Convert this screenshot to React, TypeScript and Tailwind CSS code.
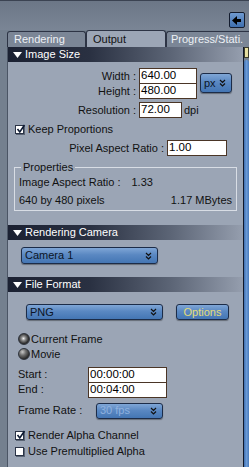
import React from 'react';

const Chevron = () => (
  <svg width="7" height="8" viewBox="0 0 7 8" className="shrink-0">
    <path d="M1 1 L3.5 3.5 L6 1 M1 4.5 L3.5 7 L6 4.5" stroke="#111" strokeWidth="1.2" fill="none" />
  </svg>
);

const Header = ({ title }: { title: string }) => (
  <div className="h-[15px] flex items-center gap-[3px] pl-[5px] text-white bg-[linear-gradient(90deg,#1b2132_0%,#2a3142_35%,#5d6677_70%,#959eae_100%)]">
    <svg width="9" height="6" viewBox="0 0 9 6">
      <path d="M0 0 H9 L4.5 6 Z" fill="#fff" />
    </svg>
    <span className="leading-none">{title}</span>
  </div>
);

const Input = ({ value, className }: { value: string; className: string }) => (
  <div className={`h-[16px] bg-white border border-[#4a3526] flex items-center pl-[1px] text-black text-[11.5px] ${className}`}>
    {value}
  </div>
);

const Select = ({ value, className, dim }: { value: string; className: string; dim?: boolean }) => (
  <div
    className={`flex items-center justify-between pl-[3px] pr-[5px] rounded-[3px] border border-[#1c2c48] bg-[linear-gradient(180deg,#7fa6d6_0%,#5a88c2_45%,#4476b4_100%)] shadow-[0_1px_1px_rgba(0,0,0,0.35)] ${className}`}
  >
    <span className={dim ? 'text-[#8fb1de]' : 'text-[#0c1526]'}>{value}</span>
    <Chevron />
  </div>
);

const Check = ({ checked }: { checked?: boolean }) => (
  <div className="w-[9px] h-[9px] bg-white border border-[#2a3346] shadow-[1px_1px_0_#5a6474] relative shrink-0">
    {checked && (
      <svg width="10" height="10" viewBox="0 0 10 10" className="absolute -top-[2px] left-0">
        <path d="M1.5 5 L3.8 8 L8.5 1" stroke="#0d1a33" strokeWidth="1.6" fill="none" />
      </svg>
    )}
  </div>
);

const Radio = ({ on }: { on?: boolean }) => (
  <div
    className={`w-[12px] h-[12px] rounded-full shrink-0 border border-[#2e333c] ${
      on
        ? 'bg-[radial-gradient(circle_at_45%_45%,#f2f2f2_0%,#8a8a8a_28%,#2c2c2c_65%,#6a6a6a_100%)]'
        : 'bg-[radial-gradient(circle_at_35%_30%,#c8c8c8_0%,#6e6e6e_35%,#262626_75%,#5a5a5a_100%)]'
    }`}
  />
);

export default function App() {
  return (
    <div
      className="w-[249px] h-[467px] overflow-hidden bg-[#74808f] border-t border-[#3b4352] flex flex-col text-[11px] text-[#111]"
      style={{ fontFamily: '"Liberation Sans", Arial, sans-serif' }}
    >
      {/* top strip */}
      <div className="h-[29px] flex justify-end items-start pt-[11px] pr-[4px] bg-[linear-gradient(180deg,#6c7787,#7a8595)]">
        <div className="w-[16px] h-[16px] rounded-[2px] border border-[#131c2e] bg-[linear-gradient(180deg,#6f9ad0,#3f6fae)] flex items-center justify-center">
          <svg width="10" height="9" viewBox="0 0 10 9">
            <path d="M0 4.5 L5 0 V3 H9 V6 H5 V9 Z" fill="#000" />
          </svg>
        </div>
      </div>

      {/* tabs */}
      <div className="h-[17px] flex items-end pl-[7px]">
        <div className="w-[79px] h-[16px] rounded-t-[3px] border border-b-0 border-[#2d3445] bg-[#7b8696] text-[#eef1f5] pl-[6px] flex items-center">
          Rendering
        </div>
        <div className="w-[80px] h-[17px] rounded-t-[3px] border border-b-0 border-[#2d3445] bg-[#9ca6b6] text-[#111] pl-[6px] flex items-center">
          Output
        </div>
        <div className="flex-1 h-[16px] rounded-tl-[3px] border border-b-0 border-r-0 border-[#2d3445] bg-[#7b8696] text-[#eef1f5] pl-[4px] flex items-center whitespace-nowrap overflow-hidden">
          Progress/Stati.
        </div>
      </div>

      {/* body */}
      <div className="flex-1 flex">
        <div className="w-[7px]" />
        <div className="w-[236px] bg-[#9ba5b5] border-l border-[#4b5565] flex flex-col">
          <Header title="Image Size" />

          <div className="flex pt-[6px]">
            <div className="flex flex-col">
              <div className="flex items-center h-[16px]">
                <span className="w-[131px] text-right pr-[3px]">Width :</span>
                <Input value="640.00" className="w-[58px]" />
              </div>
              <div className="flex items-center h-[15px]">
                <span className="w-[131px] text-right pr-[3px]">Height :</span>
                <Input value="480.00" className="w-[58px] -mt-[1px]" />
              </div>
            </div>
            <Select value="px" className="ml-[3px] mt-[5px] w-[32px] h-[20px]" />
          </div>

          <div className="flex items-center h-[16px] mt-[3px]">
            <span className="w-[131px] text-right pr-[3px]">Resolution :</span>
            <Input value="72.00" className="w-[43px]" />
            <span className="ml-[2px]">dpi</span>
          </div>

          <div className="flex items-center gap-[4px] pl-[7px] mt-[4px] h-[14px]">
            <Check checked />
            <span>Keep Proportions</span>
          </div>

          <div className="flex items-center h-[16px] mt-[4px]">
            <span className="w-[159px] text-right pr-[3px]">Pixel Aspect Ratio :</span>
            <Input value="1.00" className="w-[60px]" />
          </div>

          <div className="relative mx-[6px] mt-[11px] h-[44px] border border-[#d8dde5] pt-[8px] pl-[4px] pr-[4px] leading-[13px]">
            <span className="absolute -top-[7px] left-[6px] px-[2px] bg-[#9ba5b5]">Properties</span>
            <div className="flex">
              <span>Image Aspect Ratio :</span>
              <span className="ml-[11px]">1.33</span>
            </div>
            <div className="flex justify-between mt-[5px]">
              <span>640 by 480 pixels</span>
              <span>1.17 MBytes</span>
            </div>
          </div>

          <div className="mt-[14px]">
            <Header title="Rendering Camera" />
          </div>
          <div className="pl-[13px] pt-[7px] h-[37px]">
            <Select value="Camera 1" className="w-[137px] h-[17px]" />
          </div>

          <Header title="File Format" />
          <div className="flex items-center pl-[18px] pt-[12px]">
            <Select value="PNG" className="w-[137px] h-[16px]" />
            <div className="ml-[13px] w-[53px] h-[16px] rounded-[3px] border border-[#1c2c48] bg-[linear-gradient(180deg,#7fa6d6_0%,#5a88c2_45%,#4476b4_100%)] shadow-[0_1px_1px_rgba(0,0,0,0.35)] flex items-center justify-center text-[#e3dc78]">
              Options
            </div>
          </div>

          <div className="flex items-center gap-[1px] pl-[10px] mt-[12px] h-[14px]">
            <Radio on />
            <span>Current Frame</span>
          </div>
          <div className="flex items-center gap-[1px] pl-[10px] mt-[1px] h-[14px]">
            <Radio />
            <span>Movie</span>
          </div>

          <div className="flex items-center h-[15px] mt-[6px]">
            <span className="w-[80px] pl-[10px]">Start :</span>
            <Input value="00:00:00" className="w-[79px] h-[16px]" />
          </div>
          <div className="flex items-center h-[15px]">
            <span className="w-[80px] pl-[10px]">End :</span>
            <Input value="00:04:00" className="w-[79px] h-[16px]" />
          </div>

          <div className="flex items-center h-[17px] mt-[5px]">
            <span className="w-[88px] pl-[10px]">Frame Rate :</span>
            <Select value="30 fps" dim className="w-[67px] h-[16px]" />
          </div>

          <div className="flex items-center gap-[4px] pl-[7px] mt-[10px] h-[13px]">
            <Check checked />
            <span>Render Alpha Channel</span>
          </div>
          <div className="flex items-center gap-[4px] pl-[7px] mt-[3px] h-[13px]">
            <Check />
            <span>Use Premultiplied Alpha</span>
          </div>
        </div>

        {/* scrollbar */}
        <div className="w-[6px] flex flex-col border-l border-[#0f1729]">
          <div className="h-[11px] bg-[#e6dfa0] border border-[#3a3a2a]" />
          <div className="h-[2px]" />
          <div className="flex-1 rounded-t-[3px] bg-[linear-gradient(90deg,#3f6eae,#6a9ad6,#4a7bbb)]" />
        </div>
      </div>
    </div>
  );
}
